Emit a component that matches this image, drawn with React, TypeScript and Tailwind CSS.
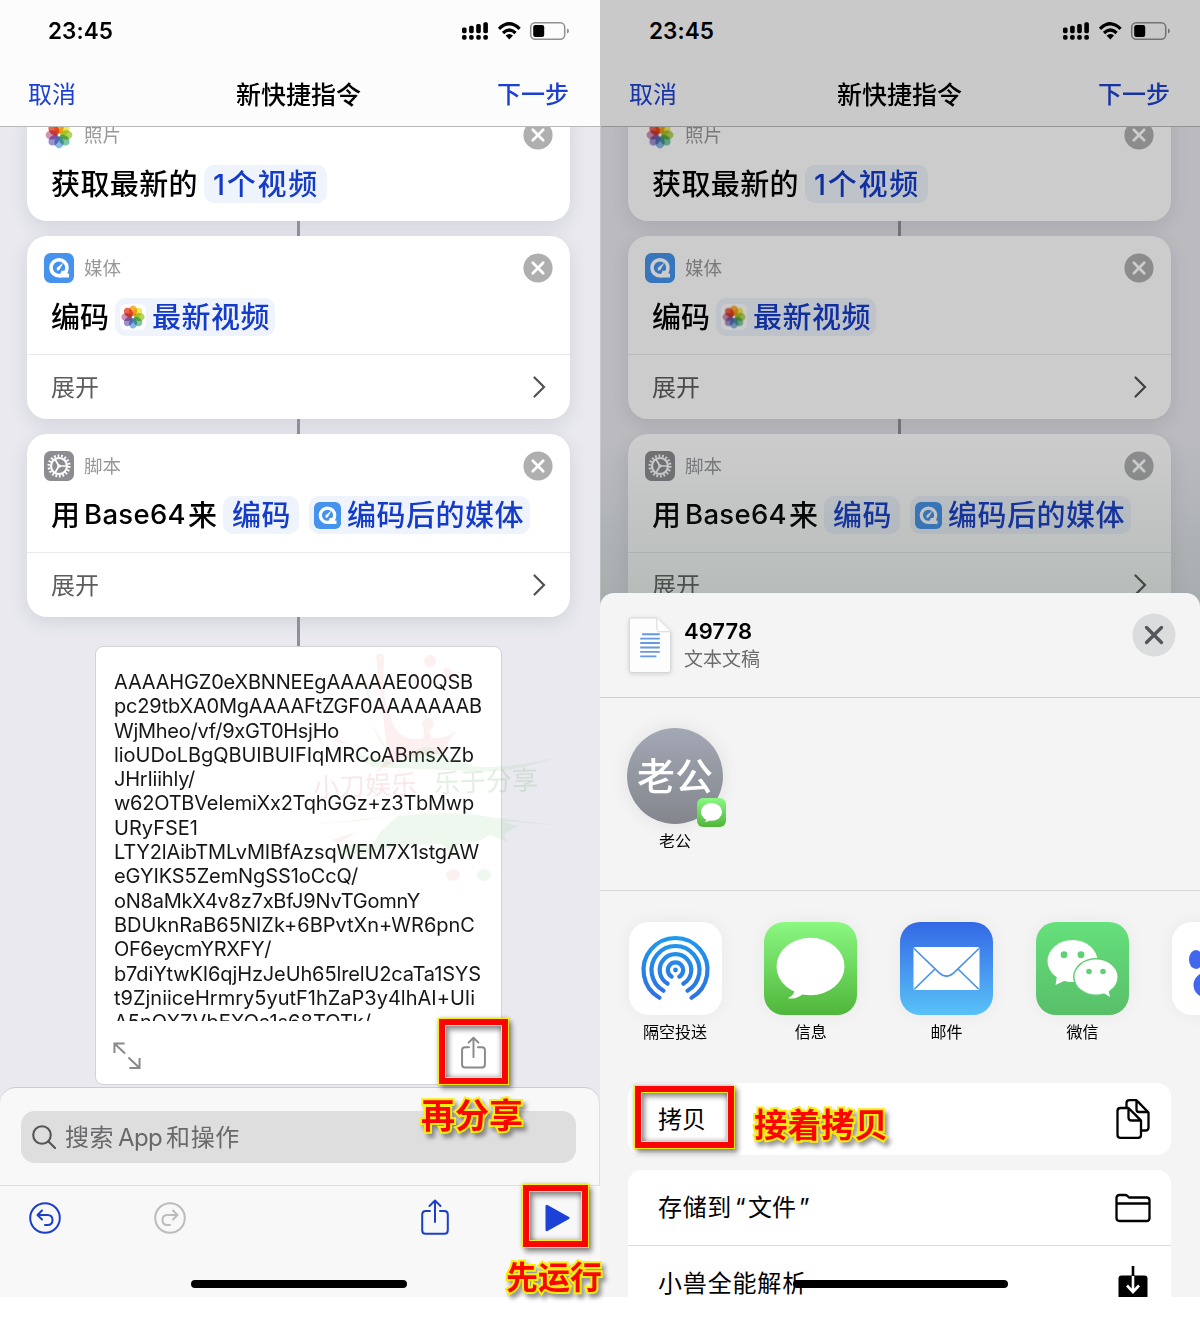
import { useLayoutEffect, useRef, useState } from 'react';
import type { ReactNode } from 'react';

const petals = ['#f9a11b', '#ece33b', '#a5cd45', '#62bd93', '#74abe0', '#8a80c6', '#c97fae', '#e9482f'];

/** Single line of text whose tracking is adjusted so that it fills `width`. */
function Fit({ width, className = '', children }: { width: number; className?: string; children: string }) {
  const ref = useRef<HTMLSpanElement>(null);
  const [spacing, setSpacing] = useState(0);
  useLayoutEffect(() => {
    const el = ref.current;
    if (!el) return;
    el.style.letterSpacing = '0px';
    const natural = el.getBoundingClientRect().width;
    const next = (width - natural) / children.length;
    el.style.letterSpacing = `${next}px`;
    setSpacing(next);
  }, [width, children]);
  return (
    <span ref={ref} className={`inline-block shrink-0 whitespace-nowrap ${className}`} style={{ letterSpacing: spacing }}>
      {children}
    </span>
  );
}

function PhotosIcon({ className }: { className: string }) {
  return (
    <svg viewBox="0 0 30 30" className={className}>
      <rect width="30" height="30" rx="7" fill="#fff" />
      {petals.map((c, i) => (
        <ellipse key={c} cx="15" cy="7.700" rx="4.700" ry="6.100" fill={c} opacity="0.85" transform={`rotate(${i * 45} 15 15)`} className="mix-blend-multiply" />
      ))}
    </svg>
  );
}

function QuickTimeIcon({ className }: { className: string }) {
  return (
    <svg viewBox="0 0 30 30" className={className}>
      <rect width="30" height="30" rx="6.5" fill="#4593ec" />
      <circle cx="15" cy="14.700" r="8" fill="none" stroke="#fff" strokeWidth="3.600" />
      <path d="M17.500 17.800H22.500L23.200 20.600H25V24.500H15Z" fill="#fff" />
      <path d="M13.2 17.8L12.6 15l7-5.6-4.3 7.6z" fill="#fff" />
    </svg>
  );
}

function GearIcon({ className }: { className: string }) {
  return (
    <svg viewBox="0 0 30 30" className={className}>
      <rect width="30" height="30" rx="6.5" fill="#8d8d91" />
      <g stroke="#fff" fill="none">
        <circle cx="15" cy="15" r="8" strokeWidth="2.200" />
        <circle cx="15" cy="15" r="10.200" strokeWidth="2.600" strokeDasharray="1.760 1.800" />
        <circle cx="15" cy="15" r="1" strokeWidth="1.600" />
        <path d="M16 15h7M14.500 14.200l-3.500-6M14.500 15.800l-3.500 6" strokeWidth="1.700" />
      </g>
    </svg>
  );
}

function RemoveIcon() {
  return (
    <svg viewBox="0 0 30 30" className="size-[30px]">
      <circle cx="15" cy="15" r="14.6" fill="#afafb0" />
      <path d="M9.8 9.8l10.4 10.4M20.2 9.8L9.8 20.2" stroke="#fff" strokeWidth="2.7" strokeLinecap="round" />
    </svg>
  );
}

function ShareIcon({ className, thin }: { className: string; thin?: boolean }) {
  return (
    <svg viewBox="0 0 28 36" className={className} fill="none" stroke="currentColor" strokeWidth={thin ? 2 : 2.2} strokeLinecap="round" strokeLinejoin="round">
      <path d="M9 12H4.500Q1.200 12 1.200 15.500V31.300Q1.200 34.800 4.500 34.800H23.500Q26.800 34.800 26.800 31.300V15.500Q26.800 12 23.500 12H19M14 23V1.500M8.500 7L14 1.500L19.500 7" />
    </svg>
  );
}

function StatusBar() {
  return (
    <div className="flex h-[62px] items-center pl-[48px]">
      <Fit width={65} className="text-[22.500px] leading-none font-semibold text-black">23:45</Fit>
      <svg viewBox="0 0 108 20" className="ml-[349px] h-[20px] w-[108px]">
        {[0, 1, 2, 3].map((i) => (
          <g key={i}>
            <rect x={i * 7.1} y={6.4 - i * 1.7} width="4.6" height={5.8 + i * 1.7} rx="1.6" />
            <rect x={i * 7.1} y="14" width="4.6" height="4.8" rx="1.8" />
          </g>
        ))}
        <g fill="none" stroke="#000" strokeWidth="3.200">
          <path d="M37 7.8Q47.3 -2.2 57.600 7.800" />
          <path d="M41 12Q47.3 6 53.600 12" />
        </g>
        <path d="M43.600 14.600Q47.300 11.400 51 14.600L47.300 18.400Z" />
        <rect x="68.700" y="1.700" width="34" height="16.600" rx="4.500" fill="none" stroke="#8f8f8f" strokeWidth="1.500" />
        <rect x="71.200" y="4" width="11" height="12" rx="2.200" />
        <path d="M105 7.500Q107 8.200 107 10T105 12.500Z" fill="#8f8f8f" />
      </svg>
    </div>
  );
}

function Pill({ className, children }: { className: string; children: ReactNode }) {
  return <div className={`flex h-[38px] shrink-0 items-center rounded-[10px] bg-[#eef3fc] text-[#153bc9] ${className}`}>{children}</div>;
}

function ActionCard({ icon, label, expandable, className = '', children }: { icon: ReactNode; label: string; expandable?: boolean; className?: string; children: ReactNode }) {
  return (
    <section className={`w-[543px] shrink-0 rounded-[20px] bg-white shadow-[0_5px_18px_rgba(60,60,90,0.13)] ${className}`}>
      <div className="flex h-[118px] flex-col pt-[17px]">
        <div className="flex h-[30px] items-center pr-[17px] pl-[17px]">
          {icon}
          <span className="ml-[10px] flex-1 text-[18.500px] leading-none text-[#98989b]">{label}</span>
          <RemoveIcon />
        </div>
        <div className="mt-[15px] flex h-[38px] items-center pl-[24px] text-[29px] leading-none font-medium text-black">{children}</div>
      </div>
      {expandable && (
        <div className="flex h-[65px] items-center justify-between border-t border-[#e9e9eb] pr-[24px] pl-[24px]">
          <span className="pt-[2px] text-[24px] leading-none text-[#5c5c5e]">展开</span>
          <svg viewBox="0 0 14 24" className="h-[24px] w-[14px]" fill="none" stroke="#515154" strokeWidth="2.200" strokeLinecap="round">
            <path d="M2.500 2.500L12 12L2.500 21.500" />
          </svg>
        </div>
      )}
    </section>
  );
}

function Connector({ className }: { className: string }) {
  return <div className={`w-[3px] shrink-0 bg-[#8e9199] ${className}`} />;
}

const resultLines: [string, number][] = [
  ['AAAAHGZ0eXBNNEEgAAAAAE00QSB', 359],
  ['pc29tbXA0MgAAAAFtZGF0AAAAAAAB', 368],
  ['WjMheo/vf/9xGT0HsjHo', 225],
  ['lioUDoLBgQBUIBUIFIqMRCoABmsXZb', 360],
  ['JHrIiihly/', 81],
  ['w62OTBVeIemiXx2TqhGGz+z3TbMwp', 360],
  ['URyFSE1', 84],
  ['LTY2lAibTMLvMIBfAzsqWEM7X1stgAW', 365],
  ['eGYIKS5ZemNgSS1oCcQ/', 244],
  ['oN8aMkX4v8z7xBfJ9NvTGomnY', 306],
  ['BDUknRaB65NIZk+6BPvtXn+WR6pnC', 361],
  ['OF6eycmYRXFY/', 157],
  ['b7diYtwKI6qjHzJeUh65lrelU2caTa1SYS', 367],
  ['t9ZjniiceHrmry5yutF1hZaP3y4lhAI+UIi', 361],
  ['A5nOXZVbEXQa1s68TOTk/', 257],
];

function Watermark() {
  return (
    <div className="pointer-events-none absolute top-[650px] left-[300px] h-[235px] w-[260px]">
      <svg viewBox="0 0 260 235" className="h-full w-full">
        <g fill="#e06070" opacity="0.09">
          <path d="M76 6Q80 1 84 6L83 36Q88 70 98 82Q108 92 123 88L126 60L131 88Q145 90 157 80L148 92Q152 108 128 104L100 108L74 124L88 108Z" />
          <circle cx="130" cy="11" r="6" />
          <ellipse cx="149" cy="24" rx="7" ry="4" transform="rotate(55 149 24)" />
          <circle cx="128" cy="74" r="6" />
          <path d="M116 22l6 22-9-15zM36 87l12 8-14-4zM32 190l24-8-18 12z" />
          <ellipse cx="153" cy="225" rx="7" ry="6" />
        </g>
        <g fill="#6cc060" opacity="0.1">
          <path d="M63 34Q66 30 68 38L72 52L68 48ZM70 72L92 106L80 92ZM54 104L86 110L98 114Q128 86 140 104L164 112L170 116Q205 120 254 108Q210 124 170 121L72 117Z" />
          <path d="M8 175Q60 170 100 164L58 171ZM98 166Q150 160 190 167L254 175L200 171L218 176L204 184L206 192L190 185Q178 194 158 194L152 204L142 194L96 196L60 205L34 204Q50 190 72 196L80 182Z" />
          <ellipse cx="184" cy="225" rx="7" ry="6" />
        </g>
      </svg>
      <div className="absolute top-[121px] left-[13px] flex -rotate-2 text-[26px] leading-none">
        <span className="w-[121px] text-[#e06070]/15">小刀娱乐</span>
        <span className="text-[#6cb070]/20">乐于分享</span>
      </div>
    </div>
  );
}

function ResultCard() {
  return (
    <section className="flex h-[439px] w-[407px] shrink-0 flex-col rounded-[8px] border border-[#d2d2d7] bg-white">
      <div className="mt-[22px] ml-[18px] h-[352px] overflow-hidden pt-px text-[20px] text-[#161616]">
        {resultLines.map(([text, width]) => (
          <div key={text} className="h-[24.300px] leading-[24.300px]">
            <Fit width={width}>{text}</Fit>
          </div>
        ))}
      </div>
      <div className="flex flex-1 items-center justify-between pt-[4px] pr-[14px] pl-[17px] text-[#8a8a8d]">
        <svg viewBox="0 0 29 29" className="mt-[3px] size-[28px]" fill="none" stroke="currentColor" strokeWidth="2.100">
          <path d="M1.500 11.500V1.500H12M1.500 1.500L12.500 12M16 16L27.500 27M27.500 16.500V27H17" />
        </svg>
        <ShareIcon className="mr-px mb-[4px] h-[33px] w-[25px]" />
      </div>
    </section>
  );
}

function EditorTop({ showResult }: { showResult?: boolean }) {
  return (
    <>
      <header className="h-[127px] shrink-0 border-b border-[#b9b9bb] bg-[#fcfcfc]">
        <StatusBar />
        <div className="flex h-[66px] items-center text-[24px] leading-none text-[#1c41d0]">
          <span className="ml-[28px] w-[208px]">取消</span>
          <span className="w-[261px] text-[25px] font-medium text-black">新快捷指令</span>
          <span className="font-medium">下一步</span>
        </div>
      </header>
      <main className="flex h-[960px] shrink-0 flex-col items-center overflow-hidden pr-[3px]">
        <ActionCard className="-mt-[24px]" icon={<PhotosIcon className="size-[30px]" />} label="照片">
          <Fit width={147}>获取最新的</Fit>
          <Pill className="ml-[6px] w-[123px] pl-[9px]">
            <Fit width={106}>1个视频</Fit>
          </Pill>
        </ActionCard>
        <Connector className="h-[15px]" />
        <ActionCard expandable icon={<QuickTimeIcon className="size-[30px]" />} label="媒体">
          <Fit width={58}>编码</Fit>
          <Pill className="ml-[6px] w-[160px] pl-[5px]">
            <PhotosIcon className="size-[26px]" />
            <Fit width={118} className="ml-[6px]">最新视频</Fit>
          </Pill>
        </ActionCard>
        <Connector className="h-[15px]" />
        <ActionCard expandable icon={<GearIcon className="size-[30px]" />} label="脚本">
          <Fit width={29}>用</Fit>
          <Fit width={102} className="ml-[4px] text-[27.500px]">Base64</Fit>
          <Fit width={29} className="ml-[2px]">来</Fit>
          <Pill className="ml-[6px] w-[76px] pl-[9px]">
            <Fit width={59}>编码</Fit>
          </Pill>
          <Pill className="ml-[10px] w-[221px] pl-[5px]">
            <QuickTimeIcon className="size-[27px]" />
            <Fit width={177} className="ml-[6px]">编码后的媒体</Fit>
          </Pill>
        </ActionCard>
        <Connector className="h-[29px]" />
        {showResult && <ResultCard />}
      </main>
    </>
  );
}

function MarkBox({ className }: { className: string }) {
  return (
    <div className={`pointer-events-none absolute border border-[#f4ec1c] shadow-[3px_4px_5px_rgba(0,0,0,0.4),0_0_4px_rgba(0,0,0,0.25)] ${className}`}>
      <div className="h-full w-full border-[6px] border-[#fb0404]">
        <div className="h-full w-full border border-[#f4ec1c] shadow-[inset_3px_4px_5px_rgba(0,0,0,0.4),inset_-1px_-1px_4px_rgba(0,0,0,0.25)]" />
      </div>
    </div>
  );
}

function MarkText({ className, children }: { className: string; children: string }) {
  return (
    <div className={`pointer-events-none absolute leading-none font-bold whitespace-nowrap text-[#fb0404] [-webkit-text-stroke:4px_#f7ee10] [filter:drop-shadow(3px_4px_2px_rgba(0,0,0,0.4))] [paint-order:stroke_fill] ${className}`}>
      {children}
    </div>
  );
}

function LeftPhone() {
  return (
    <div className="relative flex h-[1297px] w-[600px] flex-col bg-[#e9e9ef]">
      <EditorTop showResult />
      <footer className="flex h-[210px] flex-col rounded-t-[16px] border-t border-[#cbcbcf] bg-[#f8f8f8]">
        <div className="flex h-[98px] items-start rounded-tr-[16px] border-r border-b border-[#dfdfe2] pt-[23px] pl-[21px]">
          <div className="flex h-[52px] w-[555px] items-center rounded-[14px] bg-[#dedede] pl-[11px] text-[24px] leading-none text-[#69696b]">
            <svg viewBox="0 0 24 24" className="size-[24px]" fill="none" stroke="#555557" strokeWidth="2.100" strokeLinecap="round">
              <circle cx="10" cy="10" r="8.800" />
              <path d="M16.500 16.500L23 23" />
            </svg>
            <Fit width={49} className="mt-[2px] ml-[9px]">搜索</Fit>
            <Fit width={44} className="mt-[2px] ml-[4px]">App</Fit>
            <Fit width={74} className="mt-[2px] ml-[4px]">和操作</Fit>
          </div>
        </div>
        <div className="flex h-[64px] items-center text-[#1c3fc8]">
          <svg viewBox="0 0 32 32" className="ml-[29px] size-[32px]" fill="none" stroke="currentColor" strokeWidth="2" strokeLinecap="round" strokeLinejoin="round">
            <circle cx="16" cy="16" r="14.800" />
            <path d="M13 8.500L8.500 13L13 17.500M9 13H18.500Q23.500 13 23.500 18T18.500 23H16" />
          </svg>
          <svg viewBox="0 0 32 32" className="ml-[93px] size-[32px] text-[#bcbcbe]" fill="none" stroke="currentColor" strokeWidth="2" strokeLinecap="round" strokeLinejoin="round">
            <circle cx="16" cy="16" r="14.800" />
            <path d="M19 8.500L23.500 13L19 17.500M23 13H13.500Q8.500 13 8.500 18T13.500 23H16" />
          </svg>
          <ShareIcon thin className="mb-[2px] ml-[235px] h-[36px] w-[28px]" />
          <svg viewBox="0 0 26 28" className="ml-[96px] h-[28px] w-[26px]">
            <path d="M0.500 2.500Q0.500 0 2.500 1L24 13Q25.500 14 24 15L2.500 27Q0.500 28 0.500 25.500Z" fill="#1b41d6" />
          </svg>
        </div>
        <div className="mt-[30px] ml-[191px] h-[8px] w-[216px] rounded-full bg-black" />
      </footer>
      <Watermark />
      <MarkBox className="top-[1018px] left-[438px] h-[67px] w-[71px]" />
      <MarkText className="top-[1099px] left-[421px] text-[34px]">再分享</MarkText>
      <MarkBox className="top-[1184px] left-[522px] h-[64px] w-[67px]" />
    </div>
  );
}

function MessagesGlyph({ className, id }: { className: string; id: string }) {
  return (
    <svg viewBox="0 0 93 93" className={className}>
      <linearGradient id={id} x2="0" y2="1">
        <stop stopColor="#8bf882" />
        <stop offset="1" stopColor="#4fb63a" />
      </linearGradient>
      <rect width="93" height="93" rx="20" fill={`url(#${id})`} />
      <ellipse cx="46.500" cy="44.500" rx="34" ry="28.700" fill="#fff" />
      <path d="M31 66Q31 73 24 76.300Q34 77.500 40 71Z" fill="#fff" />
    </svg>
  );
}

function AirDropGlyph() {
  return (
    <svg viewBox="0 0 93 93" className="size-[93px]">
      <linearGradient id="air" gradientUnits="userSpaceOnUse" x1="0" y1="14" x2="0" y2="78">
        <stop stopColor="#1e9aea" />
        <stop offset="1" stopColor="#2f6fe2" />
      </linearGradient>
      <rect width="93" height="93" rx="20" fill="#fff" />
      <g fill="none" stroke="url(#air)" strokeWidth="4.200" strokeLinecap="round">
        {[32, 24, 15.800, 7.600].map((r) => (
          <path key={r} d={`M${46.500 - r * 0.5} ${48 + r * 0.866}A${r} ${r} 0 1 1 ${46.500 + r * 0.5} ${48 + r * 0.866}`} />
        ))}
      </g>
      <circle cx="46.500" cy="48" r="2.400" fill="#2684e6" />
    </svg>
  );
}

function MailGlyph() {
  return (
    <svg viewBox="0 0 93 93" className="size-[93px]">
      <linearGradient id="mail" x2="0" y2="1">
        <stop stopColor="#3468e6" />
        <stop offset="1" stopColor="#58c2f7" />
      </linearGradient>
      <rect width="93" height="93" rx="20" fill="url(#mail)" />
      <rect x="13.500" y="25" width="66" height="43" rx="2" fill="#fff" />
      <path d="M14 26.500L40 51.500Q46.500 57 53 51.500L79 26.500M14.500 67L35 47M78.500 67L58 47" fill="none" stroke="#4a93ea" strokeWidth="1.700" />
    </svg>
  );
}

function WeChatGlyph() {
  return (
    <svg viewBox="0 0 93 93" className="size-[93px]">
      <linearGradient id="wx" x2="0" y2="1">
        <stop stopColor="#66e07c" />
        <stop offset="1" stopColor="#58bf69" />
      </linearGradient>
      <rect width="93" height="93" rx="20" fill="url(#wx)" />
      <ellipse cx="36.500" cy="39" rx="25" ry="21" fill="#fff" />
      <path d="M21 54L19.500 63L29 58.500Z" fill="#fff" />
      <ellipse cx="60" cy="55" rx="23" ry="19" fill="#5fce71" />
      <ellipse cx="60" cy="55" rx="21.500" ry="17.500" fill="#fff" />
      <path d="M66 70L74 75L72 66Z" fill="#fff" />
      <g fill="#5fd174">
        <circle cx="28" cy="32.700" r="3.400" />
        <circle cx="45" cy="32.700" r="3.400" />
        <circle cx="53" cy="49.500" r="2.800" />
        <circle cx="67" cy="49.500" r="2.800" />
      </g>
    </svg>
  );
}

function PawGlyph() {
  return (
    <svg viewBox="0 0 93 93" className="size-[93px]">
      <rect width="93" height="93" rx="20" fill="#fff" />
      <g fill="#4267ee">
        <ellipse cx="24" cy="37.500" rx="7" ry="9.500" />
        <ellipse cx="38" cy="24" rx="7" ry="9" />
        <ellipse cx="55" cy="24" rx="7" ry="9" />
        <circle cx="34" cy="63" r="12.500" />
      </g>
    </svg>
  );
}

const apps: { name: string; glyph: ReactNode }[] = [
  { name: '隔空投送', glyph: <AirDropGlyph /> },
  { name: '信息', glyph: <MessagesGlyph className="size-[93px]" id="msg-app" /> },
  { name: '邮件', glyph: <MailGlyph /> },
  { name: '微信', glyph: <WeChatGlyph /> },
  { name: '', glyph: <PawGlyph /> },
];

function ShareSheet() {
  return (
    <div className="absolute inset-x-0 top-[593px] flex h-[704px] flex-col overflow-hidden rounded-t-[14px] bg-[#f4f4f4] text-black">
      <div className="flex h-[105px] shrink-0 border-b border-[#cfcfd1] pl-[28px]">
        <svg viewBox="0 0 44 58" className="mt-[24px] h-[57px] w-[44px] drop-shadow-sm">
          <path d="M3 1H29L43 15V54Q43 56.500 40.500 56.500H3.500Q1 56.500 1 54V3.500Q1 1 3 1Z" fill="#fdfdfd" stroke="#d5d5d7" />
          <path d="M29 1V12.500Q29 15 31.500 15H43" fill="#fff" stroke="#d5d5d7" />
          <path d="M14 17.500H32M12 22H32M12 26.500H32M12 31H32M12 35.500H32M12 40H28.500" stroke="#6699de" strokeWidth="1.900" />
        </svg>
        <div className="mt-[26px] ml-[12px] flex flex-1 flex-col">
          <Fit width={68} className="self-start text-[22px] leading-[24px] font-semibold">49778</Fit>
          <span className="mt-[7px] text-[19px] leading-[20px] text-[#6c6c6e]">文本文稿</span>
        </div>
        <svg viewBox="0 0 44 44" className="mt-[20px] mr-[24px] size-[44px]">
          <circle cx="22" cy="22" r="21.500" fill="#dbdcde" />
          <path d="M14.500 14.500L29.500 29.500M29.500 14.500L14.500 29.500" stroke="#55565a" strokeWidth="3.300" strokeLinecap="round" />
        </svg>
      </div>
      <div className="h-[193px] shrink-0 border-b border-[#d6d6d8] pt-[30px] pl-[27px]">
        <div className="relative flex size-[96px] items-center justify-center rounded-full bg-linear-to-b from-[#a3a8b5] to-[#83868c] text-[38px] leading-none font-medium text-white shadow-[0_0_20px_rgba(0,0,0,0.08)]">
          老公
          <MessagesGlyph className="absolute -right-[3px] -bottom-[3px] size-[29px]" id="msg-badge" />
        </div>
        <div className="mt-[8px] w-[96px] text-center text-[16px] leading-[18px]">老公</div>
      </div>
      <div className="flex h-[192px] w-[700px] shrink-0 gap-[42.800px] pt-[31px] pl-[28.500px]">
        {apps.map((app) => (
          <div key={app.name} className="flex w-[93px] shrink-0 flex-col items-center">
            <div className="rounded-[20px] shadow-[0_0_18px_rgba(0,0,0,0.05)]">{app.glyph}</div>
            <span className="mt-[8px] text-[16px] leading-[18px]">{app.name}</span>
          </div>
        ))}
      </div>
      <div className="ml-[28px] flex h-[72px] w-[543px] shrink-0 items-center justify-between rounded-[14px] bg-white pr-[21px] pl-[30px] text-[24px] leading-none">
        <span className="pt-[2px]">拷贝</span>
        <svg viewBox="0 0 34 40" className="h-[40px] w-[34px]" fill="none" stroke="#000" strokeWidth="2.300" strokeLinejoin="round">
          <path d="M10.500 9V4Q10.500 1.200 13.500 1.200H20.500L32.500 13.500V28.500Q32.500 31.500 29.500 31.500H25.500M20.500 1.200V10.500Q20.500 13 23 13H32.500" />
          <path d="M4.500 9H12.500L25 21.500V36Q25 38.800 22 38.800H4.500Q1.500 38.800 1.500 36V12Q1.500 9 4.500 9ZM12.500 9V18.500Q12.500 21.500 15.500 21.500H25" fill="#fff" />
        </svg>
      </div>
      <div className="mt-[15px] ml-[28px] w-[543px] shrink-0 rounded-t-[14px] bg-white text-[24px] leading-none">
        <div className="flex h-[76px] items-center justify-between border-b border-[#dcdcde] pr-[20px] pl-[30px]">
          <div className="flex">
            <Fit width={74}>存储到</Fit>
            <Fit width={10} className="ml-[3px]">“</Fit>
            <span className="ml-[3px]">文件</span>
            <Fit width={10} className="ml-[3px]">”</Fit>
          </div>
          <svg viewBox="0 0 36 30" className="h-[30px] w-[36px]" fill="none" stroke="#000" strokeWidth="2.300" strokeLinejoin="round">
            <path d="M1.500 5Q1.500 2 4.500 2H10Q11.500 2 12.500 3L14 4.500H31.500Q34.500 4.500 34.500 7.500V25Q34.500 28 31.500 28H4.500Q1.500 28 1.500 25ZM1.500 10.500H34.500" />
          </svg>
        </div>
        <div className="flex h-[75px] items-center justify-between pr-[23px] pl-[30px]">
          <Fit width={149}>小兽全能解析</Fit>
          <svg viewBox="0 0 30 36" className="h-[36px] w-[30px]">
            <rect y="9.500" x="0.500" width="29" height="27" rx="3" />
            <path d="M15 0V10" stroke="#000" strokeWidth="2.600" />
            <path d="M15 10V25M9 19.500L15 26L21 19.500" fill="none" stroke="#fff" strokeWidth="2.600" />
          </svg>
        </div>
      </div>
      <div className="absolute top-[687px] left-[193px] h-[8px] w-[215px] rounded-full bg-black" />
    </div>
  );
}

function RightPhone() {
  return (
    <div className="relative h-[1297px] w-[600px] overflow-hidden bg-[#fcfcfc]">
      <div className="ml-px flex h-[620px] w-[600px] flex-col overflow-hidden bg-[#e9e9ef]">
        <EditorTop />
      </div>
      <div className="absolute inset-x-0 top-0 h-[620px] bg-black/20" />
      <div className="absolute inset-x-0 top-[440px] h-[180px] bg-linear-to-b from-transparent to-[#507060]/20" />
      <ShareSheet />
      <MarkBox className="top-[1085px] left-[34px] h-[64px] w-[101px]" />
      <MarkText className="top-[1109px] left-[154px] text-[33.500px]">接着拷贝</MarkText>
    </div>
  );
}

export default function App() {
  return (
    <div className="relative flex h-[1325px] w-[1200px] overflow-hidden bg-white font-['Inter','Noto_Sans_CJK_SC',sans-serif]">
      <LeftPhone />
      <RightPhone />
      <MarkText className="top-[1262px] left-[506px] text-[32px]">先运行</MarkText>
    </div>
  );
}
